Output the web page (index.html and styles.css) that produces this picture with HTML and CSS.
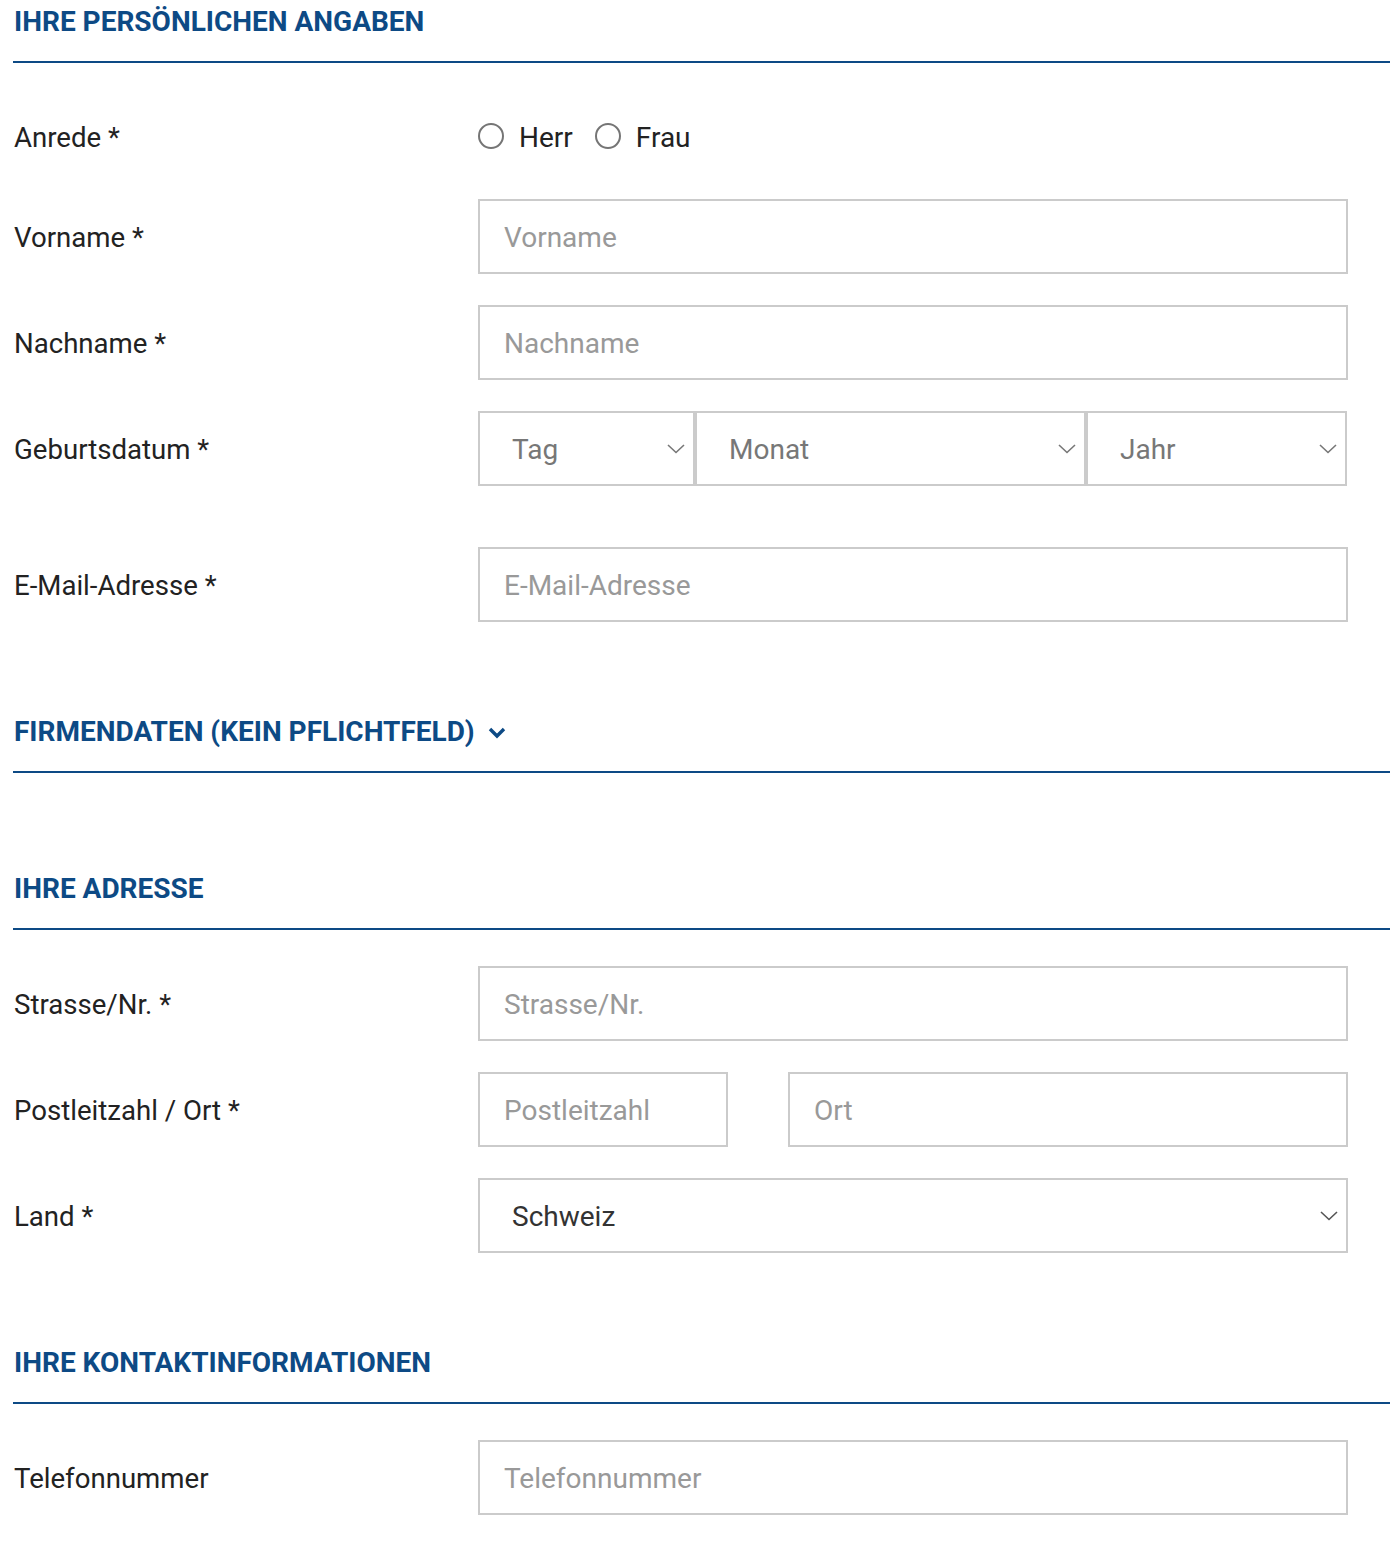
FILE: index.html
```html
<!DOCTYPE html>
<html lang="de">
<head>
<meta charset="utf-8">
<title>Formular</title>
<link rel="stylesheet" href="styles.css">
</head>
<body>
<form class="form">
  <section class="section section-first">
    <h2 class="section-title">IHRE PERSÖNLICHEN ANGABEN</h2>
    <div class="section-body">
      <div class="row row-radio">
        <div class="label">Anrede *</div>
        <div class="field radios">
          <label class="radio"><input type="radio" name="anrede"><span class="circle"></span><span>Herr</span></label>
          <label class="radio"><input type="radio" name="anrede"><span class="circle"></span><span>Frau</span></label>
        </div>
      </div>
      <div class="row">
        <div class="label">Vorname *</div>
        <div class="field"><input class="input" type="text" placeholder="Vorname"></div>
      </div>
      <div class="row">
        <div class="label">Nachname *</div>
        <div class="field"><input class="input" type="text" placeholder="Nachname"></div>
      </div>
      <div class="row row-wide-gap">
        <div class="label">Geburtsdatum *</div>
        <div class="field date">
          <div class="select-wrap sel-tag">
            <select class="select muted"><option>Tag</option></select>
            <svg class="chev" width="18" height="10" viewBox="0 0 18 10"><polyline points="1,1 9,8.5 17,1" fill="none" stroke="#777" stroke-width="1.6"/></svg>
          </div>
          <div class="select-wrap sel-monat">
            <select class="select muted"><option>Monat</option></select>
            <svg class="chev" width="18" height="10" viewBox="0 0 18 10"><polyline points="1,1 9,8.5 17,1" fill="none" stroke="#777" stroke-width="1.6"/></svg>
          </div>
          <div class="select-wrap sel-jahr">
            <select class="select muted"><option>Jahr</option></select>
            <svg class="chev" width="18" height="10" viewBox="0 0 18 10"><polyline points="1,1 9,8.5 17,1" fill="none" stroke="#777" stroke-width="1.6"/></svg>
          </div>
        </div>
      </div>
      <div class="row row-last">
        <div class="label">E-Mail-Adresse *</div>
        <div class="field"><input class="input" type="text" placeholder="E-Mail-Adresse"></div>
      </div>
    </div>
  </section>

  <section class="section section-collapsed">
    <h2 class="section-title">FIRMENDATEN (KEIN PFLICHTFELD)
      <svg class="toggle" width="18" height="12" viewBox="0 0 18 12"><polyline points="2,2 9,9 16,2" fill="none" stroke="#0d4a85" stroke-width="3.4"/></svg>
    </h2>
  </section>

  <section class="section section-address">
    <h2 class="section-title">IHRE ADRESSE</h2>
    <div class="section-body">
      <div class="row">
        <div class="label">Strasse/Nr. *</div>
        <div class="field"><input class="input" type="text" placeholder="Strasse/Nr."></div>
      </div>
      <div class="row">
        <div class="label">Postleitzahl / Ort *</div>
        <div class="field split">
          <input class="input plz" type="text" placeholder="Postleitzahl">
          <input class="input ort" type="text" placeholder="Ort">
        </div>
      </div>
      <div class="row row-last">
        <div class="label">Land *</div>
        <div class="field">
          <div class="select-wrap sel-full">
            <select class="select dark"><option>Schweiz</option></select>
            <svg class="chev" width="18" height="10" viewBox="0 0 18 10"><polyline points="1,1 9,8.5 17,1" fill="none" stroke="#555" stroke-width="1.6"/></svg>
          </div>
        </div>
      </div>
    </div>
  </section>

  <section class="section section-contact">
    <h2 class="section-title">IHRE KONTAKTINFORMATIONEN</h2>
    <div class="section-body">
      <div class="row row-last">
        <div class="label">Telefonnummer</div>
        <div class="field"><input class="input" type="text" placeholder="Telefonnummer"></div>
      </div>
    </div>
  </section>
</form>
</body>
</html>
```

FILE: styles.css
```css
* { box-sizing: border-box; }

html, body {
  margin: 0;
  padding: 0;
  background: #fff;
}

body {
  font-family: Roboto, "Liberation Sans", Arial, sans-serif;
  color: #222;
}

.form {
  margin-left: 13px;
  width: 1377px;
}

.section-title {
  margin: 0;
  padding: 5px 0 22px 1px;
  font-size: 28px;
  line-height: 34px;
  font-weight: 700;
  color: #0d4a85;
  border-bottom: 2px solid #0d4a85;
  display: flex;
  align-items: center;
}

.toggle {
  margin-left: 13px;
  margin-top: 2px;
}

.section-collapsed { margin-top: 88px; }
.section-address { margin-top: 94px; }
.section-contact { margin-top: 88px; }

.section-body {
  padding-top: 36px;
}

.row {
  display: flex;
  align-items: center;
  height: 75px;
  margin-bottom: 31px;
}

.row-radio {
  height: 76px;
  margin-bottom: 24px;
}

.row-wide-gap { margin-bottom: 61px; }
.row-last { margin-bottom: 0; }

.label {
  width: 465px;
  flex: 0 0 465px;
  font-size: 27.6px;
  line-height: 34px;
  padding-left: 1px;
  color: #222;
  padding-top: 2px;
}

.field {
  width: 870px;
  flex: 0 0 870px;
  height: 75px;
}

.radios {
  display: flex;
  align-items: center;
  gap: 22px;
}

.radio {
  display: flex;
  align-items: center;
  font-size: 28px;
  line-height: 34px;
  color: #222;
  cursor: pointer;
  padding-top: 2px;
}

.radio input {
  display: none;
}

.radio .circle {
  width: 26px;
  height: 26px;
  border: 2px solid #757575;
  border-radius: 50%;
  margin-right: 15px;
  margin-top: -4px;
}

.input {
  width: 100%;
  height: 75px;
  border: 2px solid #cbcbcb;
  border-radius: 0;
  padding: 2px 0 0 24px;
  font-family: Roboto, "Liberation Sans", Arial, sans-serif;
  font-size: 28px;
  color: #222;
  outline: none;
  background: #fff;
}

.input::placeholder {
  color: #999;
  opacity: 1;
}

.split {
  display: flex;
  justify-content: space-between;
}

.input.plz { width: 250px; }
.input.ort { width: 560px; }

.date {
  display: flex;
}

.select-wrap {
  position: relative;
  height: 75px;
}

.sel-tag { width: 217px; }
.sel-monat { width: 391px; }
.sel-jahr { width: 261px; }
.sel-full { width: 870px; }

.select {
  -webkit-appearance: none;
  appearance: none;
  width: 100%;
  height: 75px;
  border: 2px solid #cbcbcb;
  border-radius: 0;
  background: #fff;
  padding: 2px 0 0 32px;
  font-family: Roboto, "Liberation Sans", Arial, sans-serif;
  font-size: 28px;
  outline: none;
}

.select.muted { color: #777; }
.select.dark { color: #333; }

.chev {
  position: absolute;
  right: 10px;
  top: 33px;
  pointer-events: none;
}
```
